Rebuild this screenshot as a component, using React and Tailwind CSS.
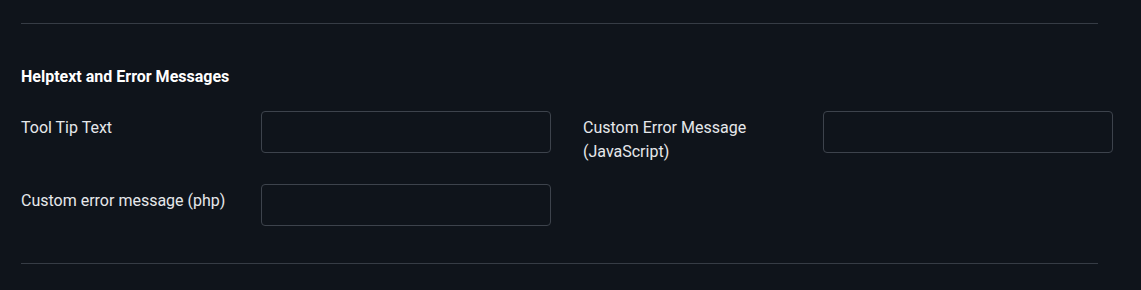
import React from "react";

// Champ avec libellé à gauche
const Field = ({ label }) => (
  <div className="flex items-start">
    <label className="w-[240px] shrink-0 pt-[5px] pr-4 text-[16px] leading-6 text-[#e6e8eb]">
      {label}
    </label>
    <input
      type="text"
      className="h-[42px] flex-1 rounded-[4px] border border-[#3d434c] bg-transparent px-3 text-[15px] text-white outline-none"
    />
  </div>
);

const App = () => {
  return (
    <div className="min-h-screen bg-[#0f141b] pl-[21px] pr-[28px] pt-[23px] font-['Roboto',sans-serif]">
      <div className="mr-[15px] h-px bg-[#363c45]" />

      <h3 className="mt-[43px] text-[16px] font-bold leading-5 text-white">
        Helptext and Error Messages
      </h3>

      <div className="mt-[24px] grid grid-cols-2 gap-x-[32px] gap-y-[20px]">
        <Field label="Tool Tip Text" />
        <Field label="Custom Error Message (JavaScript)" />
        <Field label="Custom error message (php)" />
      </div>

      <div className="mr-[15px] mt-[37px] h-px bg-[#363c45]" />
    </div>
  );
};

export default App;
